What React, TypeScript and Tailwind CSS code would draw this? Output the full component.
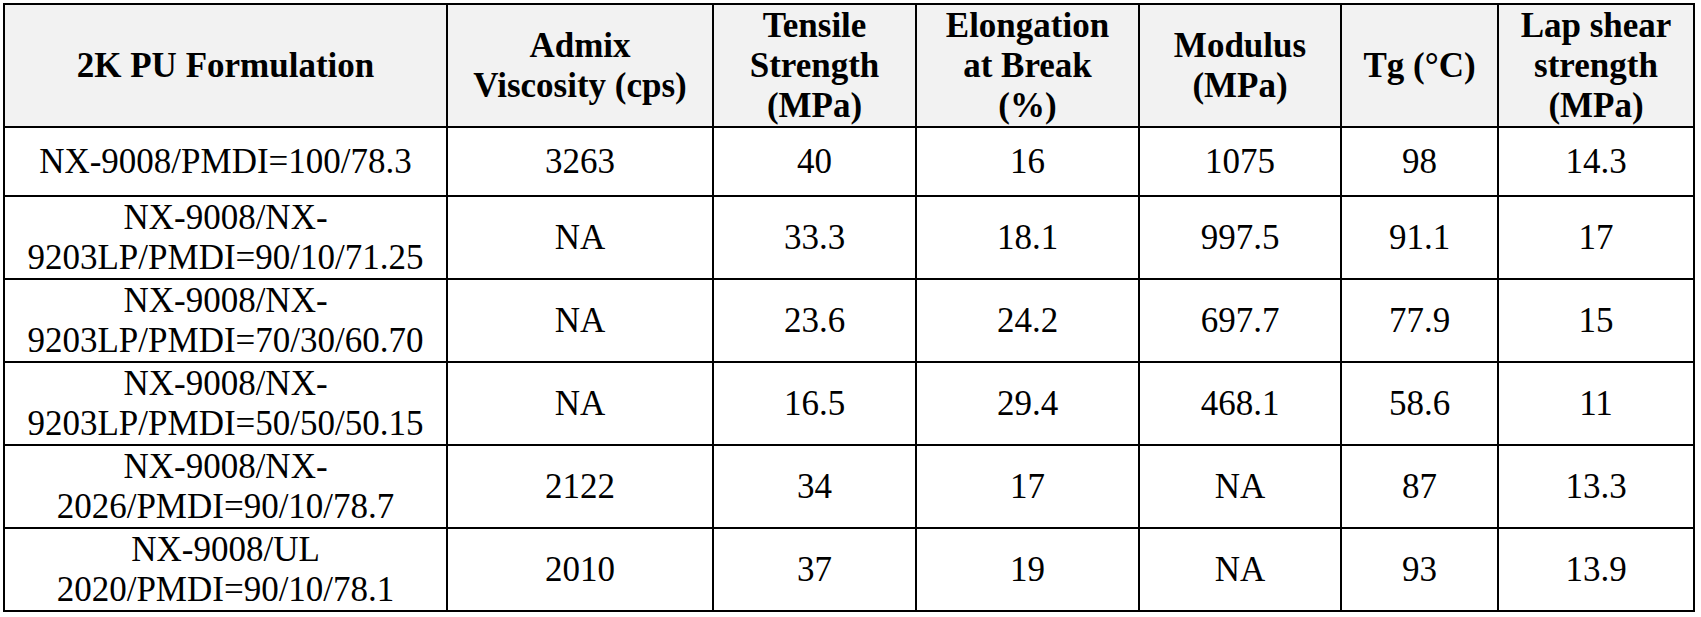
const headers: string[][] = [
  ["2K PU Formulation"],
  ["Admix", "Viscosity (cps)"],
  ["Tensile", "Strength", "(MPa)"],
  ["Elongation", "at Break", "(%)"],
  ["Modulus", "(MPa)"],
  ["Tg (°C)"],
  ["Lap shear", "strength", "(MPa)"],
];

const rows: { name: string[]; values: string[] }[] = [
  { name: ["NX-9008/PMDI=100/78.3"], values: ["3263", "40", "16", "1075", "98", "14.3"] },
  { name: ["NX-9008/NX-", "9203LP/PMDI=90/10/71.25"], values: ["NA", "33.3", "18.1", "997.5", "91.1", "17"] },
  { name: ["NX-9008/NX-", "9203LP/PMDI=70/30/60.70"], values: ["NA", "23.6", "24.2", "697.7", "77.9", "15"] },
  { name: ["NX-9008/NX-", "9203LP/PMDI=50/50/50.15"], values: ["NA", "16.5", "29.4", "468.1", "58.6", "11"] },
  { name: ["NX-9008/NX-", "2026/PMDI=90/10/78.7"], values: ["2122", "34", "17", "NA", "87", "13.3"] },
  { name: ["NX-9008/UL", "2020/PMDI=90/10/78.1"], values: ["2010", "37", "19", "NA", "93", "13.9"] },
];

// black grid behind, 2px gaps act as the ruled lines
const Cell = ({ lines, head }: { lines: string[]; head?: boolean }) => (
  <div
    className={`flex flex-col items-center justify-center text-center font-['Liberation_Serif'] ${
      head ? "bg-[#f2f2f2] font-bold" : "bg-white font-normal"
    }`}
  >
    {lines.map((l, i) => (
      <div key={i} className="whitespace-nowrap">
        {l}
      </div>
    ))}
  </div>
);

export default function App() {
  return (
    <div className="min-h-screen bg-white pl-[3px] pt-[3px]">
      <div className="grid w-fit grid-cols-[441px_264px_201px_221px_200px_155px_194px] grid-rows-[121px_67px_81px_81px_81px_81px_81px] gap-[2px] bg-black p-[2px] font-['Liberation_Serif'] text-[35px] leading-[40px] text-black">
        {headers.map((h, i) => (
          <Cell key={`h${i}`} lines={h} head />
        ))}
        {rows.map((r, ri) => [
          <Cell key={`n${ri}`} lines={r.name} />,
          ...r.values.map((v, vi) => <Cell key={`v${ri}-${vi}`} lines={[v]} />),
        ])}
      </div>
    </div>
  );
}
